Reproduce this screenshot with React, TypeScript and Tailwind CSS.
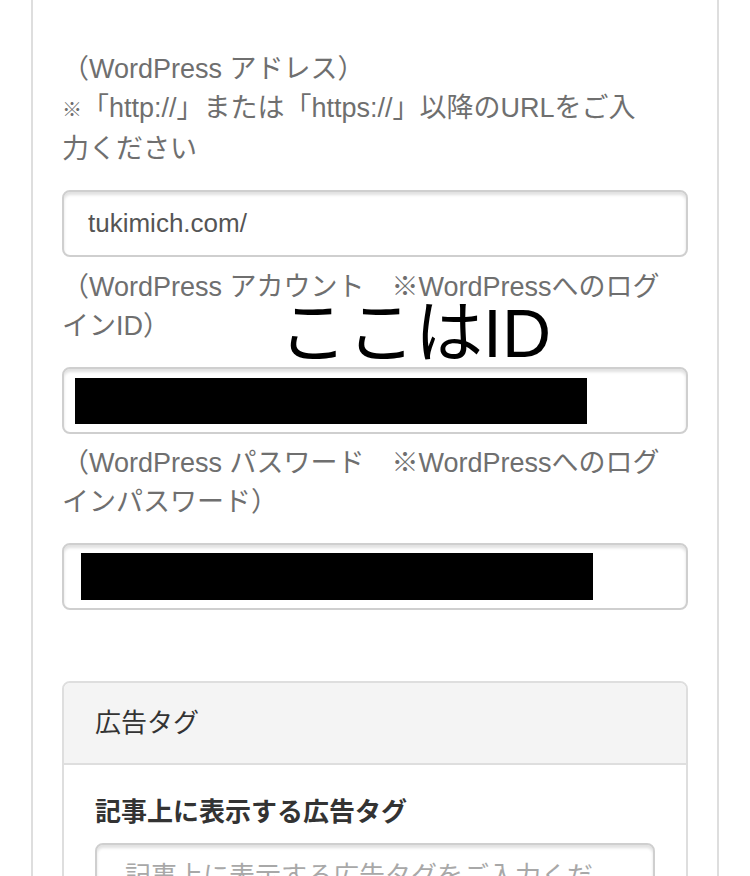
const labelCls = 'mb-[21px] text-[27px] leading-[39px] text-[#6f6f6f] whitespace-nowrap';
const inputCls =
  'flex h-[67px] items-center rounded-[8px] border-2 border-[#cfcfcf] bg-white shadow-[inset_0_3px_3px_rgba(0,0,0,0.12)]';

export default function App() {
  return (
    <div className="overflow-hidden bg-white" style={{ height: 876 }}>
      <div
        className="relative mx-[31px] border-x-2 border-[#dedede] px-[29px] pt-[50px] pb-[60px]"
        style={{ fontFamily: '"Liberation Sans", "Noto Sans CJK JP", sans-serif' }}
      >
        <p className={labelCls}>
          （WordPress アドレス）
          <br />
          <span className="text-[20px]">※</span>「http://」または「https://」以降のURLをご入
          <br />
          力ください
        </p>
        <div className={inputCls + ' mb-[11px] pl-[24px]'}>
          <span className="text-[26px] text-[#555]">tukimich.com/</span>
        </div>

        <p className={labelCls}>
          （WordPress アカウント　※WordPressへのログ
          <br />
          インID）
        </p>
        <div className={inputCls + ' mb-[10px] pl-[11px]'}>
          <div className="h-[46px] w-[512px] bg-black" />
        </div>

        <p className={labelCls}>
          （WordPress パスワード　※WordPressへのログ
          <br />
          インパスワード）
        </p>
        <div className={inputCls + ' mb-[71px] pl-[17px]'}>
          <div className="h-[47px] w-[512px] bg-black" />
        </div>

        <div className="overflow-hidden rounded-[8px] border-2 border-[#dedede]">
          <div className="flex h-[82px] items-center border-b-2 border-[#dedede] bg-[#f4f4f4] px-[31px]">
            <span className="text-[26px] text-[#333]">広告タグ</span>
          </div>
          <div className="px-[31px] pt-[28px] pb-[30px]">
            <p className="mb-[11px] text-[26px] leading-[39px] font-bold text-[#333]">記事上に表示する広告タグ</p>
            <div className="h-[120px] rounded-[8px] border-2 border-[#cfcfcf] px-[28px] pt-[12px] shadow-[inset_0_3px_3px_rgba(0,0,0,0.12)]">
              <span className="text-[26px] leading-[39px] text-[#a8a8a8]">記事上に表示する広告タグをご入力くだ</span>
            </div>
          </div>
        </div>

        <span className="absolute top-[299px] left-[246px] text-[68px] leading-none text-black">ここはID</span>
      </div>
    </div>
  );
}
